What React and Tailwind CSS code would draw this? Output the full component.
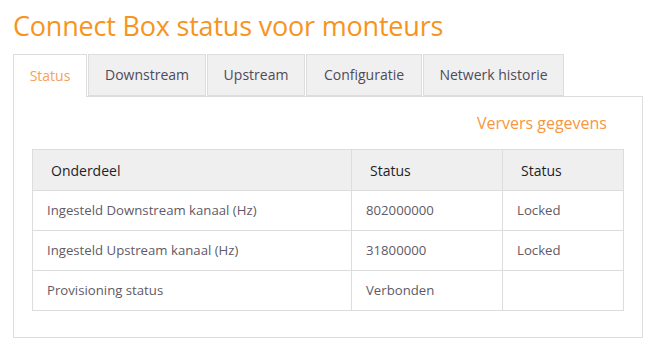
import React from 'react';

const tabs = [
  ['Status', 'w-[74px]'],
  ['Downstream', 'w-[118px]'],
  ['Upstream', 'w-[98px]'],
  ['Configuratie', 'w-[116px]'],
  ['Netwerk historie', 'w-[141px]'],
];

const rows = [
  ['Ingesteld Downstream kanaal (Hz)', '802000000', 'Locked'],
  ['Ingesteld Upstream kanaal (Hz)', '31800000', 'Locked'],
  ['Provisioning status', 'Verbonden', ''],
];

export default function App() {
  return (
    <div className="min-h-screen bg-white pl-[13px] pr-[13px] pt-[8px] font-['Open_Sans',sans-serif]">
      {/* Titel */}
      <h1 className="text-[27px] leading-[36px] text-[#f7941d] font-normal tracking-[-0.2px]">
        Connect Box status voor monteurs
      </h1>

      {/* Tabs */}
      <div className="mt-[10px] flex gap-[1px]">
        {tabs.map(([t, w], i) =>
          i === 0 ? (
            <div
              key={t}
              className={`${w} relative z-10 -mb-px h-[43px] border border-b-0 border-[#dddddd] bg-white text-center text-[14px] leading-[42px] text-[#f7a05a]`}
            >
              {t}
            </div>
          ) : (
            <div
              key={t}
              className={`${w} h-[42px] border border-[#dddddd] bg-[#f0f0f0] text-center text-[14px] leading-[40px] text-[#4f4a5a]`}
            >
              {t}
            </div>
          )
        )}
      </div>

      {/* Paneel */}
      <div className="w-[630px] border border-[#dddddd] px-[18px] pb-[26px]">
        <div className="flex justify-end pr-[17px] pt-[15px] pb-[15px]">
          <span className="text-[16px] leading-[22px] text-[#f7963f]">Ververs gegevens</span>
        </div>

        <table className="w-[592px] border-collapse text-[13.2px]">
          <thead>
            <tr className="h-[41px] bg-[#efefef]">
              <th className="w-[319px] border border-[#dddddd] pl-[18px] text-left font-normal text-[14px] text-[#1e1e28]">Onderdeel</th>
              <th className="w-[151px] border border-[#dddddd] pl-[18px] text-left font-normal text-[14px] text-[#1e1e28]">Status</th>
              <th className="border border-[#dddddd] pl-[18px] text-left font-normal text-[14px] text-[#1e1e28]">Status</th>
            </tr>
          </thead>
          <tbody>
            {rows.map((r) => (
              <tr key={r[0]} className="h-[40px]">
                {r.map((c, j) => (
                  <td key={j} className="border border-[#dddddd] pl-[14px] text-[#5f5a66]">
                    {c}
                  </td>
                ))}
              </tr>
            ))}
          </tbody>
        </table>
      </div>
    </div>
  );
}
